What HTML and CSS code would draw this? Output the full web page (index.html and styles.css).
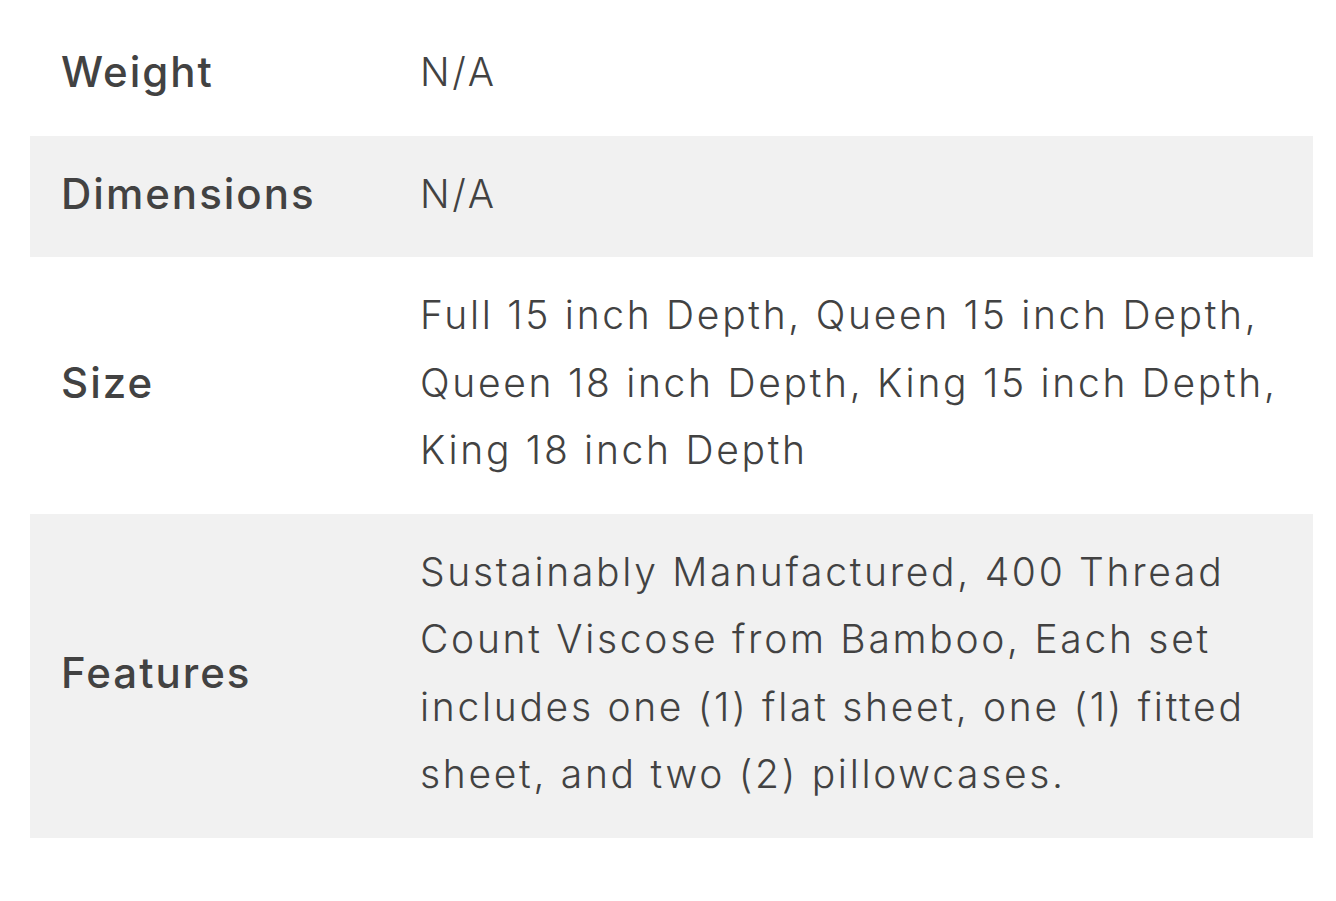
FILE: index.html
```html
<!DOCTYPE html>
<html lang="en">
<head>
<meta charset="utf-8">
<title>Additional information</title>
<link rel="stylesheet" href="styles.css">
</head>
<body>
<div class="wrap">
  <table class="attrs">
    <tbody>
      <tr class="row">
        <th class="label">Weight</th>
        <td class="value">N/A</td>
      </tr>
      <tr class="row alt">
        <th class="label">Dimensions</th>
        <td class="value">N/A</td>
      </tr>
      <tr class="row">
        <th class="label">Size</th>
        <td class="value">Full 15 inch Depth, Queen 15 inch Depth, Queen 18 inch Depth, King 15 inch Depth, King 18 inch Depth</td>
      </tr>
      <tr class="row alt">
        <th class="label">Features</th>
        <td class="value">Sustainably Manufactured, 400 Thread Count Viscose from Bamboo, Each set includes one (1) flat sheet, one (1) fitted sheet, and two (2) pillowcases.</td>
      </tr>
    </tbody>
  </table>
</div>
</body>
</html>
```

FILE: styles.css
```css
html, body {
  margin: 0;
  padding: 0;
  background: #ffffff;
}

.wrap {
  padding: 14px 23px 0 30px;
}

.attrs {
  width: 100%;
  border-collapse: collapse;
  border-spacing: 0;
  font-family: Inter, "Noto Sans", sans-serif;
  line-height: 67.5px;
  color: #424242;
}

.row.alt {
  background: #f1f1f1;
}

.label {
  width: 328px;
  padding: 24px 31px 30px;
  text-align: left;
  vertical-align: middle;
  font-size: 42px;
  font-weight: 500;
  letter-spacing: 2px;
}

.value {
  padding: 24px 10px 30px 0;
  text-align: left;
  vertical-align: middle;
  font-size: 39px;
  font-weight: 300;
  letter-spacing: 2.7px;
}
```
